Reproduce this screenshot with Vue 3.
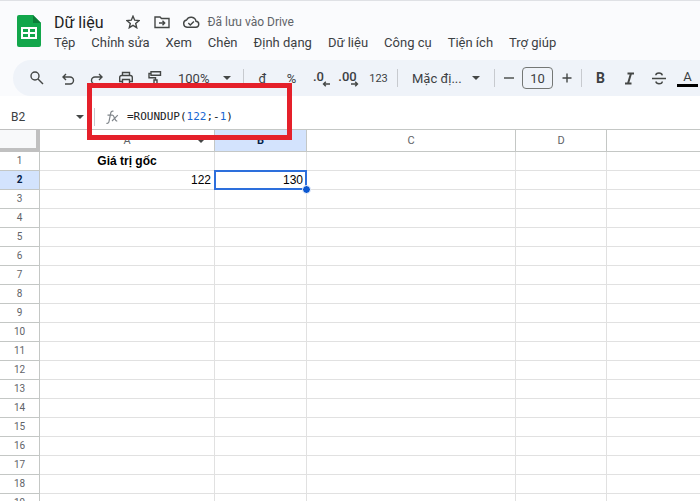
<script setup>
import { ref } from 'vue'

const menus = ['Tệp', 'Chỉnh sửa', 'Xem', 'Chèn', 'Định dạng', 'Dữ liệu', 'Công cụ', 'Tiện ích', 'Trợ giúp']
const columns = ['A', 'B', 'C', 'D', '']
const rowCount = 19
const cells = {
  A1: { value: 'Giá trị gốc', kind: 'heading' },
  A2: { value: '122', kind: 'number' },
  B2: { value: '130', kind: 'number' },
}
const active = { column: 'B', row: 2 }
const fontSize = ref('10')

const cell = (column, row) => cells[column + row]
const isActive = (column, row) => column === active.column && row === active.row
</script>

<template>
  <div class="app">
    <header class="top">
      <svg class="logo" viewBox="0 0 24 32" aria-hidden="true">
        <path d="M2 0h14l8 8v22a2 2 0 0 1-2 2H2a2 2 0 0 1-2-2V2a2 2 0 0 1 2-2z" fill="#12a64b" />
        <path d="M16 0l8 8h-8z" fill="#0b7d38" />
        <path d="M4 12h16v12H4zM6 14v3h5v-3zM13 14v3h5v-3zM6 19v3h5v-3zM13 19v3h5v-3z" fill="#fff" fill-rule="evenodd" />
      </svg>
      <div class="headings">
        <div class="title-row">
          <h1>Dữ liệu</h1>
          <button class="plain star" aria-label="Gắn dấu sao">
            <svg viewBox="0 0 14 14"><path d="M7 1.2l1.7 4 4.3.4-3.3 2.8 1 4.3L7 10.4l-3.7 2.3 1-4.3L1 5.6l4.3-.4z" /></svg>
          </button>
          <button class="plain folder" aria-label="Di chuyển">
            <svg viewBox="0 0 16 14"><path d="M1 2h5l1.500 1.500H15V12.500H1zM5 8h5.500M8.500 5.800L10.700 8l-2.200 2.200" /></svg>
          </button>
          <button class="plain cloud" aria-label="Trạng thái lưu">
            <svg viewBox="0 0 18 14"><path d="M5 12.300h8.500a3 3 0 0 0 .5-6A5 5 0 0 0 4.600 5 3.700 3.700 0 0 0 5 12.300zM6.300 8l2 2 3.600-3.600" /></svg>
          </button>
          <span class="saved">Đã lưu vào Drive</span>
        </div>
        <nav class="menus">
          <button v-for="menu in menus" :key="menu" class="plain">{{ menu }}</button>
        </nav>
      </div>
    </header>

    <div class="toolbar" role="toolbar">
      <button class="tool search" aria-label="Tìm kiếm">
        <svg viewBox="0 0 16 16"><circle cx="6" cy="6" r="4" /><path d="M9 9l5 5" /></svg>
      </button>
      <button class="tool low" aria-label="Hủy">
        <svg viewBox="0 0 16 16"><path d="M6 3L3 6l3 3M3 6h7a3.500 3.500 0 0 1 0 7H5" /></svg>
      </button>
      <button class="tool low" aria-label="Làm lại">
        <svg viewBox="0 0 16 16"><path d="M10 3l3 3-3 3M13 6H6a3.500 3.500 0 0 0 0 7h5" /></svg>
      </button>
      <button class="tool" aria-label="In">
        <svg viewBox="0 0 16 16"><path d="M4.500 5.500V2.500h7v3M4 11.500H1.700v-4a2 2 0 0 1 2-2h8.600a2 2 0 0 1 2 2v4H12M4.500 9.500h7v4.500h-7z" /></svg>
      </button>
      <button class="tool" aria-label="Sao chép định dạng">
        <svg viewBox="0 0 16 16"><path d="M4 1.800h9.500v3.500H4zM4 3.500H2v4.200h6.500V10M7 10h3v5H7z" /></svg>
      </button>
      <label class="picker zoom">
        <select aria-label="Thu phóng"><option>100%</option></select>
        <svg class="caret" viewBox="0 0 8 4"><path d="M0 0h8L4 4z" /></svg>
      </label>
      <span class="rule"></span>
      <button class="tool">đ</button>
      <button class="tool">%</button>
      <button class="tool decimal" aria-label="Giảm số thập phân">
        <span>.0</span>
        <svg viewBox="0 0 8 6"><path d="M8 3H1.500M3.800.7L1.500 3l2.300 2.300" /></svg>
      </button>
      <button class="tool decimal" aria-label="Tăng số thập phân">
        <span>.00</span>
        <svg viewBox="0 0 8 6"><path d="M0 3h6.500M4.200.7L6.500 3 4.200 5.300" /></svg>
      </button>
      <button class="tool small">123</button>
      <span class="rule"></span>
      <label class="picker font">
        <select aria-label="Phông chữ"><option>Mặc đị...</option></select>
        <svg class="caret" viewBox="0 0 8 4"><path d="M0 0h8L4 4z" /></svg>
      </label>
      <span class="rule"></span>
      <button class="tool step" aria-label="Giảm cỡ chữ">
        <svg viewBox="0 0 16 16"><path d="M3 8h10" /></svg>
      </button>
      <input v-model="fontSize" class="size" aria-label="Cỡ chữ" />
      <button class="tool step" aria-label="Tăng cỡ chữ">
        <svg viewBox="0 0 16 16"><path d="M3.500 8h9M8 3.500v9" /></svg>
      </button>
      <span class="rule"></span>
      <button class="tool bold">B</button>
      <button class="tool" aria-label="In nghiêng">
        <svg class="heavy" viewBox="0 0 16 16"><path d="M5.500 3.500H12M3 13.500h6.500M9 3.500l-3 10" /></svg>
      </button>
      <button class="tool" aria-label="Gạch ngang">
        <svg viewBox="0 0 16 16"><path d="M1 8.500h14M11.300 5.300C11 3.700 9.700 3 8 3S4.800 3.900 4.800 5.300M4.800 11.500C5.200 13 6.400 13.700 8 13.700s3.300-.8 3.300-2.200" /></svg>
      </button>
      <button class="tool color"><span>A</span></button>
    </div>

    <div class="formula-bar">
      <button class="name-box">
        <span>B2</span>
        <svg class="caret" viewBox="0 0 8 4"><path d="M0 0h8L4 4z" /></svg>
      </button>
      <span class="rule"></span>
      <svg class="fx" viewBox="0 0 14 16" role="img" aria-label="Hàm">
        <path d="M8.500 2.300C6.800 1.700 6 2.600 5.700 4.200L4 12.500c-.3 1.500-1.200 2.200-2.600 1.700M2.500 6.200h5M7.300 6.200c2.200-.4 2 6.300 5 5.800M12.800 6.200L7 12" />
      </svg>
      <code>=ROUNDUP(<b>122</b>;-<b>1</b>)</code>
      <div class="highlight"></div>
    </div>

    <table class="sheet">
      <colgroup>
        <col class="w-number" />
        <col class="w-a" />
        <col class="w-b" />
        <col class="w-c" />
        <col class="w-d" />
        <col />
      </colgroup>
      <thead>
        <tr>
          <th class="corner"></th>
          <th v-for="column in columns" :key="column" scope="col" :class="{ current: column === active.column }">
            <div class="column-head">
              <span>{{ column }}</span>
              <svg v-if="column === 'A'" class="caret" viewBox="0 0 8 4"><path d="M0 0h8L4 4z" /></svg>
            </div>
          </th>
        </tr>
      </thead>
      <tbody>
        <tr v-for="row in rowCount" :key="row">
          <th scope="row" :class="{ current: row === active.row }">{{ row }}</th>
          <td
            v-for="column in columns"
            :key="column"
            :class="[cell(column, row)?.kind, { selected: isActive(column, row) }]"
          >{{ cell(column, row)?.value }}</td>
        </tr>
      </tbody>
    </table>
  </div>
</template>

<style>
body {
  margin: 0;
}
</style>

<style scoped>
.app {
  display: flex;
  flex-direction: column;
  height: 100vh;
  overflow: hidden;
  box-sizing: border-box;
  border-top: 1px solid #dfe1e5;
  background: #fafbfd;
  color: #3c4043;
  font-family: Roboto, "Liberation Sans", sans-serif;
  font-size: 13px;
}

button,
select,
input {
  margin: 0;
  padding: 0;
  border: 0;
  background: none;
  color: inherit;
  font: inherit;
}

svg {
  display: block;
  fill: none;
  stroke: #444746;
  stroke-width: 1.4;
}

.caret {
  width: 8px;
  height: 4px;
  fill: #444746;
  stroke: none;
}

.top {
  display: flex;
  flex: none;
  gap: 13px;
  height: 59px;
  padding-left: 17px;
}

.logo {
  width: 24px;
  height: 32px;
  margin-top: 14px;
  stroke: none;
}

.headings {
  padding-top: 10px;
}

.title-row {
  display: flex;
  align-items: center;
  height: 22px;
}

h1 {
  margin: 0 23px 0 0;
  color: #1f1f1f;
  font-size: 16px;
  font-weight: 400;
}

.star svg {
  width: 14px;
  height: 14px;
}

.folder {
  margin-left: 14px;
}

.folder svg {
  width: 16px;
  height: 14px;
}

.cloud {
  margin: 0 7px 0 12px;
}

.cloud svg {
  width: 18px;
  height: 14px;
}

.saved {
  color: #5f6368;
  font-size: 12px;
}

.menus {
  display: flex;
  gap: 16px;
  line-height: 20px;
  white-space: nowrap;
}

.toolbar {
  display: flex;
  flex: none;
  align-items: center;
  height: 36px;
  margin-left: 13px;
  padding-left: 9px;
  border-radius: 18px 0 0 18px;
  background: #eff3f9;
}

.tool {
  display: grid;
  flex: none;
  place-items: center;
  width: 29px;
  height: 28px;
}

.tool svg {
  width: 16px;
  height: 16px;
}

.search {
  margin-right: 2px;
}

.low {
  padding-top: 2px;
}

.picker {
  display: grid;
  flex: none;
  align-items: center;
}

.picker select,
.picker svg {
  grid-area: 1 / 1;
}

.picker select {
  width: 100%;
  appearance: none;
}

.picker svg {
  justify-self: end;
  pointer-events: none;
}

.zoom {
  width: 70px;
}

.zoom select {
  padding-left: 9px;
}

.zoom svg {
  margin-right: 8px;
}

.font {
  width: 88px;
}

.font select {
  padding-left: 10px;
}

.font svg {
  margin-right: 10px;
}

.rule {
  flex: none;
  width: 1px;
  height: 18px;
  margin: 0 4px;
  background: #c7cacf;
}

.decimal {
  position: relative;
  box-sizing: border-box;
  padding: 0 4px 3px 0;
  font-weight: 500;
}

.tool.decimal svg {
  position: absolute;
  right: 5px;
  bottom: 5px;
  width: 8px;
  height: 6px;
}

.small {
  font-size: 11px;
}

.step {
  width: 20px;
}

.size {
  flex: none;
  box-sizing: border-box;
  width: 31px;
  height: 22px;
  margin: 0 4px 0 3px;
  border: 1px solid #747775;
  border-radius: 4px;
  text-align: center;
}

.bold {
  font-size: 14px;
  font-weight: 700;
}

.tool svg.heavy {
  stroke-width: 2;
}

.color span {
  width: 21px;
  border-bottom: 3px solid #000;
  line-height: 15px;
}

.formula-bar {
  position: relative;
  display: flex;
  flex: none;
  align-items: center;
  height: 25px;
  padding-top: 8px;
  background: #fff;
}

.name-box {
  display: flex;
  align-items: center;
  justify-content: space-between;
  width: 84px;
  padding-left: 11px;
  font-size: 12px;
}

.formula-bar .rule {
  margin: 0 10px;
}

.fx {
  width: 14px;
  height: 16px;
  margin-right: 8px;
  stroke: #80868b;
  stroke-width: 1.2;
}

code {
  color: #202124;
  font-family: "DejaVu Sans Mono", monospace;
  font-size: 11px;
}

code b {
  color: #1967d2;
  font-weight: 400;
}

.highlight {
  position: absolute;
  top: -13px;
  left: 87px;
  z-index: 2;
  box-sizing: border-box;
  width: 205px;
  height: 57px;
  border: 5px solid #e5202a;
}

.sheet {
  flex: none;
  width: 100%;
  border-spacing: 0;
  background: #fff;
  table-layout: fixed;
}

.w-number {
  width: 40px;
}

.w-a {
  width: 175px;
}

.w-b {
  width: 92px;
}

.w-c {
  width: 209px;
}

.w-d {
  width: 91px;
}

th,
td {
  box-sizing: border-box;
  height: 19px;
  padding: 0 3px;
  border: solid #e1e1e1;
  border-width: 0 1px 1px 0;
  color: #000;
  font-family: "Liberation Sans", sans-serif;
  font-size: 12px;
  line-height: 16px;
}

th {
  border-color: #c4c7c5;
  color: #5f6368;
  font-family: Roboto, sans-serif;
  font-size: 10px;
  font-weight: 400;
}

thead th {
  height: 23px;
  border-top-width: 1px;
  font-size: 11px;
}

thead th:last-child,
td:last-child {
  border-right-width: 0;
}

.corner {
  border: solid #c0c0c0;
  border-width: 1px 4px 4px 0;
  background: #f8f9fa;
}

.column-head {
  display: grid;
  align-items: center;
}

.column-head span,
.column-head svg {
  grid-area: 1 / 1;
}

.column-head svg {
  justify-self: end;
  margin-right: 6px;
}

th.current {
  background: #d3e3fd;
  color: #041e49;
  font-weight: 700;
}

.heading {
  font-weight: 700;
  text-align: center;
}

.number {
  text-align: right;
}

.selected {
  position: relative;
}

.selected::before {
  position: absolute;
  inset: -1px;
  border: 2px solid #2d6fdc;
  content: "";
}

.selected::after {
  position: absolute;
  right: -5px;
  bottom: -5px;
  z-index: 1;
  width: 7px;
  height: 7px;
  border: 1px solid #fff;
  border-radius: 50%;
  background: #0b57d0;
  content: "";
}
</style>
